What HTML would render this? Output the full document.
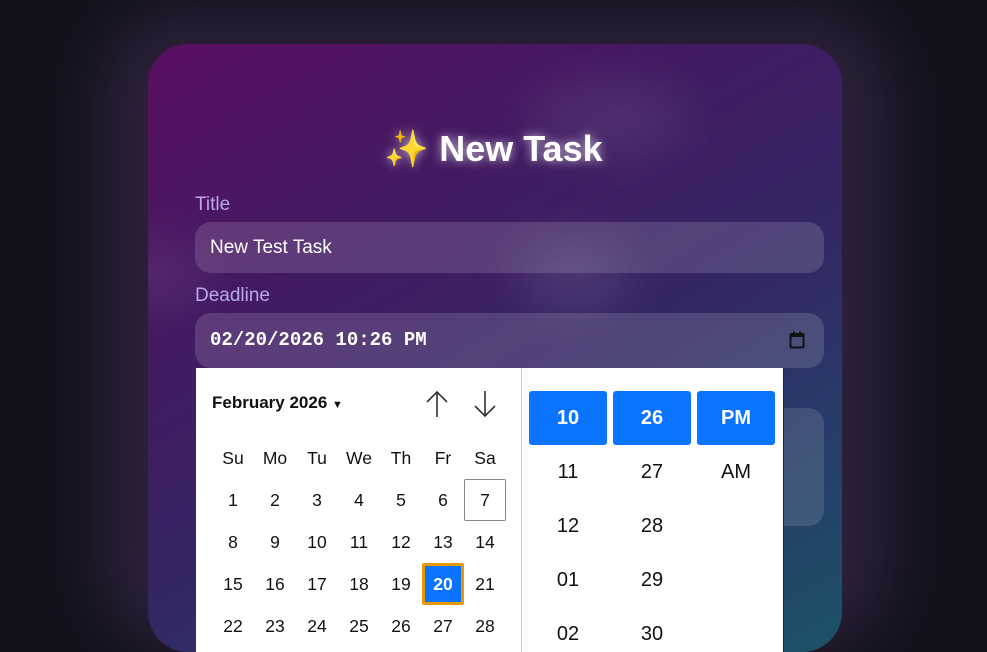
<!DOCTYPE html>
<html><head><style>
html,body{margin:0;padding:0;width:987px;height:652px;overflow:hidden;background:#13111c;font-family:"Liberation Sans",sans-serif}
.wrap{position:relative;width:987px;height:652px;overflow:hidden}
.glow{position:absolute;left:100px;top:10px;width:790px;height:640px;border-radius:80px;background:rgba(90,60,110,.35);filter:blur(30px)}
.card{position:absolute;left:148px;top:44px;width:694px;height:608px;border-radius:40px;overflow:hidden;
background:linear-gradient(150deg,#5a0f62 0%,#431a62 30%,#352563 55%,#283a68 75%,#1c5368 100%)}
.blob{position:absolute;border-radius:50%;filter:blur(25px);background:rgba(255,255,255,.08)}
h1{position:absolute;left:0;right:0;top:128px;margin:0;text-align:center;color:#fff;font-size:36px;font-weight:bold;text-shadow:0 0 10px rgba(255,255,255,.7)}
.lbl{position:absolute;left:195px;color:#b9a8ee;font-size:19px}
.inp{position:absolute;left:195px;width:629px;border-radius:16px;background:rgba(255,255,255,.14);color:#fff}
.pop{position:absolute;left:196px;top:368px;width:587px;height:284px;overflow:hidden;background:#fff;border-right:1px solid #222}
.mh{position:absolute;left:16px;top:25px;font-weight:bold;font-size:17px;color:#111}
.grid{position:absolute;left:16px;top:69px;display:grid;grid-template-columns:repeat(7,42px);grid-auto-rows:42px;font-size:17.5px;color:#111}
.grid div{display:flex;align-items:center;justify-content:center;box-sizing:border-box}
.col{position:absolute;top:23px;width:78px;font-size:20px;color:#111}
.col div{height:54px;display:flex;align-items:center;justify-content:center;box-sizing:border-box}
.col .s{background:#0a74ff;color:#fff;font-weight:bold;border-radius:3px}
</style></head><body><div class="wrap">
<div class="glow"></div>
<div class="card">
<div class="blob" style="left:380px;top:40px;width:160px;height:70px"></div>
<div class="blob" style="left:370px;top:200px;width:110px;height:60px;background:rgba(255,255,255,.12)"></div>
<div class="blob" style="left:-40px;top:200px;width:100px;height:60px"></div>
</div>
<h1>✨ New Task</h1>
<div class="lbl" style="top:194px">Title</div>
<div class="inp" style="top:222px;height:51px;line-height:51px;font-size:19px;padding-left:15px;box-sizing:border-box">New Test Task</div>
<div class="lbl" style="top:285px">Deadline</div>
<div class="inp" style="top:313px;height:55px;line-height:55px;font-family:'Liberation Mono',monospace;font-weight:bold;font-size:19px;padding-left:15px;box-sizing:border-box">02/20/2026 10:26 PM
<svg style="position:absolute;right:19px;top:18px" width="16" height="18" viewBox="0 0 16 18"><rect x="1.5" y="3" width="13" height="13.5" rx="1" fill="none" stroke="#111" stroke-width="2"/><rect x="1.5" y="3" width="13" height="3" fill="#111"/><rect x="4" y="0.5" width="2" height="3" fill="#111"/><rect x="10" y="0.5" width="2" height="3" fill="#111"/></svg></div>
<div class="inp" style="top:408px;height:118px;left:700px;width:124px;background:rgba(255,255,255,.12)"></div>
<div class="pop">
<div class="mh">February 2026 <span style="font-size:11px">▼</span></div>
<svg style="position:absolute;left:228px;top:22px" width="26" height="28" viewBox="0 0 26 28"><path d="M13 27V2M3 12L13 2l10 10" fill="none" stroke="#333" stroke-width="1.6"/></svg>
<svg style="position:absolute;left:276px;top:22px" width="26" height="28" viewBox="0 0 26 28"><path d="M13 1v25M3 16l10 10 10-10" fill="none" stroke="#333" stroke-width="1.6"/></svg>
<div class="grid">
<div>Su</div><div>Mo</div><div>Tu</div><div>We</div><div>Th</div><div>Fr</div><div>Sa</div>
<div>1</div><div>2</div><div>3</div><div>4</div><div>5</div><div>6</div><div style="border:1px solid #888;border-radius:2px">7</div>
<div>8</div><div>9</div><div>10</div><div>11</div><div>12</div><div>13</div><div>14</div>
<div>15</div><div>16</div><div>17</div><div>18</div><div>19</div><div style="background:#0a74ff;color:#fff;font-weight:bold;border:3px solid #e59a00;border-radius:2px">20</div><div>21</div>
<div>22</div><div>23</div><div>24</div><div>25</div><div>26</div><div>27</div><div>28</div>
</div>
<div style="position:absolute;left:325px;top:0;width:1px;height:290px;background:#ccc"></div>
<div class="col" style="left:333px"><div class="s">10</div><div>11</div><div>12</div><div>01</div><div>02</div></div>
<div class="col" style="left:417px"><div class="s">26</div><div>27</div><div>28</div><div>29</div><div>30</div></div>
<div class="col" style="left:501px"><div class="s">PM</div><div>AM</div></div>
</div>
</div></body></html>
